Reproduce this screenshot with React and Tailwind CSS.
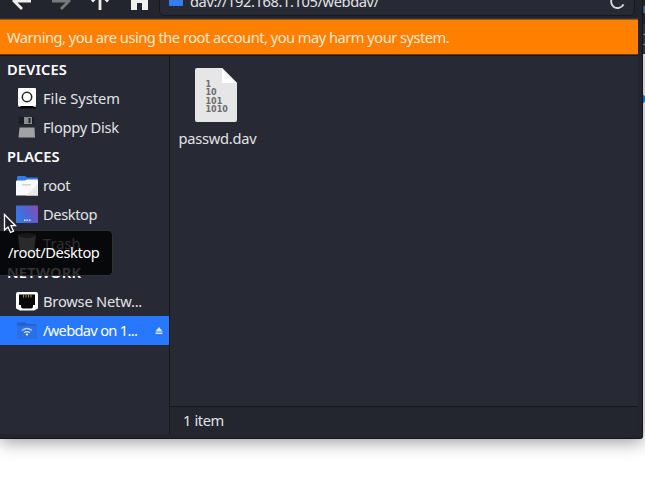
import React from 'react';

const text = "font-['Noto_Sans','Open_Sans',sans-serif]";

function Row({ icon, label, selected, tracking = '', children }) {
  return (
    <li
      className={
        'flex h-[29px] shrink-0 items-center pl-[15px] ' +
        (selected ? 'bg-[#2777ff] text-white' : 'text-[#e2e3e5]')
      }
    >
      <span className="flex w-7 shrink-0 items-center">{icon}</span>
      <span className={'whitespace-nowrap pb-[2px] ' + tracking}>{label}</span>
      {children}
    </li>
  );
}

function Heading({ children, first, tracking = '' }) {
  return (
    <li
      className={
        'flex shrink-0 items-center pb-[2px] pl-[7px] text-[14.67px] font-semibold text-white ' +
        (first ? 'h-[28px] ' : 'h-[29px] ') +
        tracking
      }
    >
      <span>{children}</span>
    </li>
  );
}

const DriveIcon = () => (
  <svg width="24" height="24" viewBox="0 0 24 24">
    <rect x="3" y="1" width="18" height="18" rx="1" fill="#fff" />
    <circle cx="12" cy="10" r="4.700" fill="none" stroke="#222" strokeWidth="1.500" />
    <path d="M3 19h18v2.500H3z" fill="#050506" />
    <path d="M3.500 19h2v1h-2zM18.500 19H21v1h-2.500z" fill="#bbb" />
  </svg>
);

const FloppyIcon = () => (
  <svg width="24" height="24" viewBox="0 0 24 24">
    <rect x="3" y="1" width="17" height="20" rx="1" fill="#262831" />
    <rect x="4" y="1" width="5" height="7" fill="#1b1c22" />
    <rect x="9" y="1" width="8" height="7" fill="#8b8c90" />
    <rect x="13.500" y="2" width="2" height="5" fill="#222329" />
    <rect x="17" y="1" width="2" height="7" fill="#1b1c22" />
    <path d="M4.500 11.500h15l.5 10H3.500z" fill="#a1a2a6" />
  </svg>
);

const FolderIcon = () => (
  <svg width="24" height="24" viewBox="0 0 24 24">
    <path d="M2 8V3Q2 2 3.500 2H10l2 1.500h10q1 0 1 1V10H2z" fill="#3279ee" />
    <path d="M1 7.500q0-1 1-1h8l2-1h10q1 0 1 1v15H1z" fill="#fafafa" />
    <path d="M23 10v11.500H11z" fill="#e9e9e9" />
    <path d="M7 10h9v1.600H7z" fill="#d5d5d5" />
  </svg>
);

const DesktopIcon = () => (
  <svg width="24" height="24" viewBox="0 0 24 24">
    <defs>
      <linearGradient id="desk" x1="0" y1="0.6" x2="1" y2="0.2">
        <stop offset="0" stopColor="#3679e8" />
        <stop offset="0.55" stopColor="#5463d0" />
        <stop offset="1" stopColor="#8550b3" />
      </linearGradient>
    </defs>
    <rect x="1" y="2.500" width="22" height="17.500" rx="0.700" fill="url(#desk)" />
    <path d="M9 16.500h1.500V18H9zM11.500 16.500H13V18h-1.500zM14 16.500h1.500V18H14z" fill="#e5eaff" />
  </svg>
);

const TrashIcon = () => (
  <svg width="24" height="24" viewBox="0 0 24 24">
    <path d="M3 3h18l-2 17q-.2 1-1.200 1H6.200Q5.200 21 5 20z" fill="#d0d0d0" />
    <ellipse cx="12" cy="3.500" rx="8.500" ry="2.500" fill="#777" />
  </svg>
);

const EthernetIcon = () => (
  <svg width="24" height="24" viewBox="0 0 24 24">
    <path
      d="M3 2h18q2 0 2 2v13.500q0 1.500-1.500 1.700L19 20.500H5l-2.500-1.300Q1 19 1 17.500V4q0-2 2-2z"
      fill="#fff"
    />
    <path d="M4 4.500h16V15h-2v1.500q0 2-2 2H8q-2 0-2-2V15H4z" fill="#090909" />
    <path d="M8.500 4.500v3M11 4.500v3M13.500 4.500v3M16 4.500v3" stroke="#9c8b48" strokeWidth="1" />
  </svg>
);

const RemoteIcon = () => (
  <svg width="24" height="24" viewBox="0 0 24 24">
    <path d="M2 3.500h8l2 1.500h9.500v3H2z" fill="#245fc4" />
    <path d="M2 6.500h20v13.500H2z" fill="#2a6fe6" />
    <path d="M7 11.500q5-4 10 0" fill="none" stroke="#b5d0ff" strokeWidth="1.300" />
    <path d="M9 13.800q3-2.400 6 0" fill="none" stroke="#d5e4ff" strokeWidth="1.300" />
    <circle cx="12" cy="15.500" r="1.100" fill="#fff" />
  </svg>
);

function Toolbar() {
  return (
    <header className="flex h-[19px] w-[638px] shrink-0 items-end overflow-hidden border-b border-[#33353e] bg-[#23252e]">
      <svg width="159" height="18" viewBox="0 0 159 18" className="shrink-0" fill="none">
        <path d="M31 1H14M22-7l-8 8 8 8" stroke="#eeeeec" strokeWidth="2.800" />
        <path d="M52 1h17M61-7l8 8-8 8" stroke="#77797c" strokeWidth="2.800" />
        <path d="M100 10V-6M92 1.500l8-8 8 8" stroke="#eeeeec" strokeWidth="2.800" />
        <path d="M129-1l11-9 11 9h-3v11h-6V3h-5v7h-6V-1z" fill="#eeeeec" />
      </svg>
      <div className="mb-[2px] flex h-8 w-[476px] shrink-0 items-center rounded-[5px] border border-[#15171c] bg-[#272a34] pl-[9px] pr-[9px]">
        <svg width="14" height="14" viewBox="0 0 14 14" className="mb-[3px] shrink-0">
          <rect width="14" height="14" rx="1" fill="#367bf0" />
        </svg>
        <span className="mt-px ml-[7px] grow whitespace-nowrap text-[14.67px] leading-[20px] tracking-[-0.4px] text-[#e2e3e5]">
          dav://192.168.1.105/webdav/
        </span>
        <svg width="15" height="15" viewBox="0 0 15 15" className="mt-[2px] shrink-0" fill="none">
          <path d="M13.500 10.300a6.500 6.500 0 1 1 0-5.500" stroke="#d8d8d8" strokeWidth="1.900" />
        </svg>
      </div>
    </header>
  );
}

function Sidebar() {
  return (
    <ul className="flex w-[170px] shrink-0 flex-col border-r border-[#15171c] bg-[#272a34]">
      <Heading first tracking="tracking-[0.1px]">DEVICES</Heading>
      <Row icon={<DriveIcon />} label="File System" />
      <Row icon={<FloppyIcon />} label="Floppy Disk" tracking="tracking-[-0.25px]" />
      <Heading tracking="tracking-[0.1px]">PLACES</Heading>
      <Row icon={<FolderIcon />} label="root" tracking="tracking-[-0.45px]" />
      <Row icon={<DesktopIcon />} label="Desktop" tracking="tracking-[-0.4px]" />
      <Row icon={<TrashIcon />} label="Trash" />
      <Heading tracking="tracking-[0.25px]">NETWORK</Heading>
      <Row icon={<EthernetIcon />} label="Browse Netw..." tracking="tracking-[-0.2px]" />
      <Row icon={<RemoteIcon />} label="/webdav on 1..." tracking="tracking-[-0.7px]" selected>
        <svg width="8" height="8" viewBox="0 0 8 8" className="ml-auto mr-[6px] shrink-0">
          <path d="M4 0l3.700 4.500H.3zM.5 5.500h7V7h-7z" fill="#dce8ff" />
        </svg>
      </Row>
    </ul>
  );
}

function BinaryFile() {
  return (
    <div className="flex w-[95px] flex-col items-center">
      <svg width="42" height="54" viewBox="0 0 42 54" className="mr-[3px]">
        <path d="M2 0h25l15 15v37q0 2-2 2H2q-2 0-2-2V2q0-2 2-2z" fill="#e6e6e6" />
        <path d="M27 0l15 15H27z" fill="#fff" />
        <g
          fill="#6c6c6c"
          fontFamily="DejaVu Sans, sans-serif"
          fontWeight="700"
          fontSize="8"
        >
          <text x="10.500" y="18.500">1</text>
          <text x="10.500" y="26.500">10</text>
          <text x="10.500" y="35.500">101</text>
          <text x="10.500" y="44">1010</text>
        </g>
      </svg>
      <span className="mt-[6px] leading-[20px] tracking-[-0.25px]">passwd.dav</span>
    </div>
  );
}

export default function App() {
  return (
    <div className={'relative h-[481px] w-[645px] overflow-hidden bg-white text-[14.67px] ' + text}>
      <div className="flex h-[54px] flex-col items-end">
        <div className="h-6 w-[7px] bg-[#292b31]" />
        <div className="h-[30px] w-[7px] bg-[#3c3e43]" />
      </div>
      <div className="absolute left-[641px] top-[95px] h-2 w-1 rounded-full bg-[#1689d8]" />
      <div className="absolute left-[642px] top-[6px] h-[7px] w-[3px] bg-[#56718c]" />
      <div className="absolute left-[641px] top-[34px] h-[11px] w-[4px] border-y border-[#a3a5a8]" />

      <div className="absolute left-0 top-0 flex h-[439px] w-[643px] flex-col rounded-br-[3px] border-b border-r border-[#14161b] bg-[#23252e] shadow-[0_3px_17px_rgba(0,0,0,0.4)]">
        <Toolbar />
        <div className="flex h-[36px] w-[638px] shrink-0 items-center border-b border-t border-b-[#6f3e13] border-t-[#9a5511] bg-[#ff8000] pl-[7px] text-[#ffe6cc]">
          <span className="whitespace-nowrap tracking-[-0.51px]">
            Warning, you are using the root account, you may harm your system.
          </span>
        </div>
        <div className="flex h-[379px] w-[638px] shrink-0 border-t border-[#15171c]">
          <Sidebar />
          <main className="flex grow flex-col text-[#e2e3e5]">
            <section className="h-[350px] shrink-0 bg-[#272a34] pt-[12px]">
              <BinaryFile />
            </section>
            <footer className="flex grow items-center border-t border-[#15171c] bg-[#23262e] pb-[2px] pl-[13px]">
              <span className="tracking-[-0.4px]">1 item</span>
            </footer>
          </main>
        </div>
      </div>

      <div className="absolute left-[-4px] top-[230px] flex h-[46px] w-[117px] items-center rounded-[5px] border border-[#303137] bg-black/80 pb-[2px] pl-[11px] text-white">
        <span className="tracking-[-0.4px]">/root/Desktop</span>
      </div>
      <svg
        className="absolute left-[3px] top-[213px]"
        width="14"
        height="21"
        viewBox="0 0 14 21"
      >
        <path
          d="M1.500 1.500v15.500l3.500-3 2.500 5.500 3-1.300L8 12.700h4.500z"
          fill="#202128"
          stroke="#fff"
          strokeWidth="1.300"
        />
      </svg>
    </div>
  );
}
